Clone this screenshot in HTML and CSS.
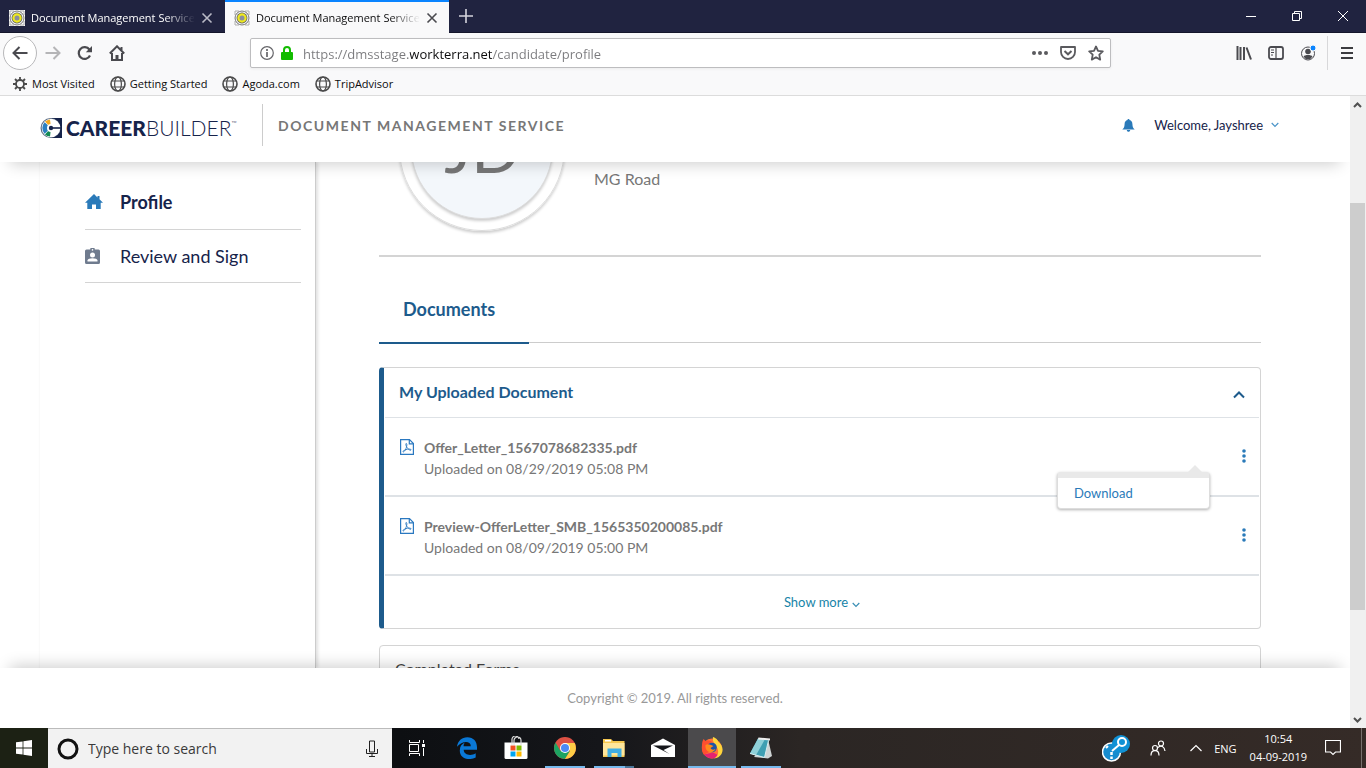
FILE: index.html
```html
<!doctype html>
<html lang="en">

<head>
    <meta charset="utf-8">
    <title>Document Management Service</title>
    <link rel="stylesheet" href="styles.css">
</head>

<body>
    <!-- shared icons -->
    <svg class="sprite" width="0" height="0">
        <symbol id="favicon" viewBox="0 0 16 16">
            <rect width="16" height="16" fill="#fff"/>
            <path d="M1 5V1h4M11 1h4v4M15 11v4h-4M5 15H1v-4" fill="none" stroke="#aaa" stroke-width="1"/>
            <circle cx="8" cy="8" r="7" fill="#f1f1f1" stroke="#777"/>
            <circle cx="8" cy="8" r="5.400" fill="#55585c"/>
            <circle cx="8" cy="8" r="3.600" fill="#8b8f9c" stroke="#efe920" stroke-width="2.200"/>
        </symbol>
        <symbol id="globe" viewBox="0 0 16 16">
            <g fill="none" stroke="#4a4a4a">
                <circle cx="8" cy="8" r="7" stroke-width="1.6"/>
                <ellipse cx="8" cy="8" rx="3.4" ry="7" stroke-width="1.2"/>
                <path d="M2 5h12M2 11h12" stroke-width="1.2"/>
            </g>
        </symbol>
        <symbol id="close" viewBox="0 0 12 12">
            <path d="M1.5 1.5l9 9M10.500 1.500l-9 9" fill="none" stroke="currentColor" stroke-width="1.6"/>
        </symbol>
        <symbol id="pdf" viewBox="0 0 14 16">
            <g fill="none" stroke="#2a78c0">
                <path d="M.6.600h8.900l3.900 3.900v10.900H.6z" stroke-width="1.2"/>
                <path d="M9.300.800v4h4" stroke-width="1.2"/>
                <path d="M6.200 4.500c1.200 0 .6 3.200-.3 5.200-.8 1.900-2.200 3.700-2.900 3.200-.8-.8 2.500-2.400 4.600-2.700 2-.3 3.800 0 3.500.8-.4.800-2.600-.4-3.800-2C6.200 7.600 5.200 4.500 6.200 4.500z" stroke-width=".9"/>
            </g>
        </symbol>
        <symbol id="dots" viewBox="0 0 4 14">
            <circle cx="2" cy="2" r="1.8"/><circle cx="2" cy="7" r="1.8"/><circle cx="2" cy="12" r="1.800"/>
        </symbol>
    </svg>

    <div class="tabBar">
        <div class="tab">
            <svg width="16" height="16"><use href="#favicon"/></svg>
            <span class="tabTitle">Document Management Service</span>
            <button aria-label="Close tab"><svg width="12" height="12"><use href="#close"/></svg></button>
        </div>
        <div class="tab activeTab">
            <svg width="16" height="16"><use href="#favicon"/></svg>
            <span class="tabTitle">Document Management Service</span>
            <button aria-label="Close tab"><svg width="12" height="12"><use href="#close"/></svg></button>
        </div>
        <button class="newTab" aria-label="New tab"><svg width="14" height="14"><path d="M7 0v14M0 7h14" stroke="#d4d4dc" stroke-width="1.600"/></svg></button>
        <div class="windowButtons">
            <button aria-label="Minimize"><svg width="10" height="10"><path d="M0 5.500h10" stroke="#fff"/></svg></button>
            <button aria-label="Restore"><svg width="10" height="10"><path d="M.5 2.500h7v7h-7zM2.500 2.500v-2h7v7h-2" fill="none" stroke="#fff"/></svg></button>
            <button aria-label="Close"><svg width="10" height="10"><path d="M0 0l10 10M10 0L0 10" stroke="#fff"/></svg></button>
        </div>
    </div>

    <div class="navBar">
        <div class="navButtons">
            <button class="backButton" aria-label="Back"><svg width="16" height="14"><path d="M15.500 7H1.500M7.500 1L1.500 7l6 6" fill="none" stroke="#4a4a4f" stroke-width="2"/></svg></button>
            <button aria-label="Forward"><svg width="16" height="14"><path d="M.5 7h14M8.500 1l6 6-6 6" fill="none" stroke="#b5b5b7" stroke-width="2"/></svg></button>
            <button aria-label="Reload"><svg width="16" height="16"><path d="M13 10.500A5.900 5.900 0 1 1 12.400 4.500" fill="none" stroke="#4a4a4f" stroke-width="2.200"/><path d="M15 1v6.200H8.800z" fill="#4a4a4f"/></svg></button>
            <button aria-label="Home"><svg width="16" height="16"><path d="M.8 8.500L8 1.300l7.200 7.200M3 8v7h10V8M12.500 5V2" fill="none" stroke="#4a4a4f" stroke-width="2"/><path d="M6.500 15v-5h3v5z" fill="#4a4a4f"/></svg></button>
        </div>
        <div class="urlBox">
            <svg width="14" height="14"><circle cx="7" cy="7" r="6.300" fill="none" stroke="#66666a" stroke-width="1.200"/><path d="M7 6v5M7 3v2" stroke="#66666a" stroke-width="1.700"/></svg>
            <svg width="12" height="14"><path d="M3 7V4a3 3 0 0 1 6 0v3" fill="none" stroke="#12bc00" stroke-width="2"/><rect y="6" width="12" height="8" rx="1" fill="#12bc00"/></svg>
            <input class="urlInput" type="text" aria-label="Address" value="https://dmsstage.workterra.net/candidate/profile">
            <button aria-label="Page actions"><svg width="16" height="16" fill="#5a5a5e"><circle cx="2" cy="8" r="2"/><circle cx="8" cy="8" r="2"/><circle cx="14" cy="8" r="2"/></svg></button>
            <button aria-label="Save to Pocket"><svg width="16" height="16"><path d="M1 2h14v5a7 7 0 0 1-14 0z" fill="none" stroke="#5a5a5e" stroke-width="1.800" stroke-linejoin="round"/><path d="M4.500 6L8 9.300 11.500 6" fill="none" stroke="#5a5a5e" stroke-width="2"/></svg></button>
            <button aria-label="Bookmark"><svg width="16" height="16"><path d="M8 1.500l2 4.300 4.800.6-3.500 3.300.9 4.900L8 12.200l-4.200 2.400.9-4.900L1.200 6.400 6 5.800z" fill="none" stroke="#5a5a5e" stroke-width="1.800" stroke-linejoin="round"/></svg></button>
        </div>
        <div class="toolButtons">
            <button aria-label="Library"><svg width="16" height="16"><path d="M1.500 1v14M4.500 2v13M8 2v13M10.500 2.500l4.500 12" fill="none" stroke="#4a4a4f" stroke-width="2"/></svg></button>
            <button aria-label="Sidebars"><svg width="16" height="16"><rect x="1" y="2" width="14" height="12" rx="2" fill="none" stroke="#4a4a4f" stroke-width="1.800"/><path d="M8 2v12" stroke="#4a4a4f" stroke-width="1.200"/><path d="M3 5h3M3 7.500h3M3 10h2" stroke="#4a4a4f"/></svg></button>
            <button aria-label="Account"><svg width="16" height="16"><circle cx="8" cy="8.500" r="6.500" fill="none" stroke="#4a4a4f"/><circle cx="8" cy="6.500" r="2.800" fill="#4a4a4f"/><path d="M3.500 11.500c1-2 8-2 9 0a5 5 0 0 1-9 0z" fill="#4a4a4f"/><circle cx="13" cy="3" r="3" fill="#0a84ff" stroke="#f9f9fa"/></svg></button>
            <span class="toolLine"></span>
            <button aria-label="Menu"><svg width="12" height="12"><path d="M0 1h12M0 6h12M0 11h12" stroke="#3c3c40" stroke-width="2"/></svg></button>
        </div>
    </div>

    <div class="bookmarks">
        <a href="#"><svg width="16" height="16"><circle cx="8" cy="8" r="4" fill="none" stroke="#4a4a4a" stroke-width="1.800"/><path d="M8 1v3M8 12v3M1 8h3M12 8h3M3 3l2 2M11 11l2 2M13 3l-2 2M5 11l-2 2" stroke="#4a4a4a" stroke-width="1.800"/></svg>Most Visited</a>
        <a href="#"><svg width="16" height="16"><use href="#globe"/></svg>Getting Started</a>
        <a href="#"><svg width="16" height="16"><use href="#globe"/></svg>Agoda.com</a>
        <a href="#"><svg width="16" height="16"><use href="#globe"/></svg>TripAdvisor</a>
    </div>

    <div class="viewport">
        <div class="page">
            <header class="header">
                <a class="logo" href="#" aria-label="CareerBuilder">
                    <svg width="22" height="20" viewBox="0 0 22 20">
                        <path d="M10 0h12v20H10z" fill="#16234a"/>
                        <circle cx="10.500" cy="10" r="10" fill="#5d6e85"/>
                        <circle cx="11" cy="10" r="9.300" fill="#fff"/>
                        <path d="M11 10L5 3.500A8.600 8.600 0 0 1 10 1.400z" fill="#f5a81c"/>
                        <path d="M11 10L4.600 4.200a8.600 8.600 0 0 0 0 11.600z" fill="#2c7fc0"/>
                        <path d="M11 10L5 16.500a8.600 8.600 0 0 0 5 2.100z" fill="#128a53"/>
                        <circle cx="11" cy="10" r="4" fill="#fff"/>
                        <circle cx="11" cy="10" r="2.200" fill="#16234a"/>
                        <path d="M11 9.200h11v1.600H11z" fill="#16234a"/>
                    </svg>
                    <span class="logoText"><b>CAREER</b>BUILDER<small>™</small></span>
                </a>
                <h1 class="serviceName">DOCUMENT MANAGEMENT SERVICE</h1>
                <button class="bell" aria-label="Notifications"><svg width="13" height="13"><path d="M6.500 0c.7 0 1 .4 1 1C9.500 1.500 10.300 3 10.400 5c.1 3 .8 4.300 2.300 5.500H.3C1.800 9.300 2.500 8 2.600 5c.1-2 .9-3.500 2.900-4 0-.6.3-1 1-1zM4.800 11h3.400c0 2.400-3.400 2.400-3.400 0z" fill="#2a7ab9"/></svg></button>
                <button class="userMenu">Welcome, Jayshree<svg width="8" height="6"><path d="M.7 1L4 4.300 7.300 1" fill="none" stroke="#4a94c8" stroke-width="1.200"/></svg></button>
            </header>

            <div class="middle">
                <nav class="sidebar">
                    <a class="activeLink" href="#"><svg width="18" height="16"><path d="M9 0l3.500 3.400V2h2v3.300L18 8.700h-2.300V15H11v-4.500H7V15H2.300V8.700H0z" fill="#2a7ab9"/></svg>Profile</a>
                    <a href="#"><svg width="18" height="16"><path d="M1.500 1.500h3.700a2.300 2.300 0 0 1 4.600 0h3.700A1.500 1.500 0 0 1 15 3v11.500a1.500 1.500 0 0 1-1.500 1.500h-12A1.500 1.500 0 0 1 0 14.500V3a1.500 1.500 0 0 1 1.500-1.500z" fill="#6f7b8e"/><circle cx="7.500" cy="1.900" r=".8" fill="#fff"/><circle cx="7.500" cy="7" r="2.500" fill="#fff"/><path d="M2.500 13.500v-1c0-3 10-3 10 0v1z" fill="#fff"/></svg>Review and Sign</a>
                </nav>

                <main class="content">
                    <section class="profile">
                        <div class="avatar"><span>JD</span></div>
                        <p class="address">MG Road</p>
                    </section>

                    <div class="docTabs">
                        <button class="docTab">Documents</button>
                    </div>

                    <section class="card openCard">
                        <div class="cardHeader">
                            <h2>My Uploaded Document</h2>
                            <button aria-label="Collapse"><svg width="12" height="8"><path d="M1 6.500L6 1.500l5 5" fill="none" stroke="#1d5b8c" stroke-width="2"/></svg></button>
                        </div>
                        <div class="docRow">
                            <svg width="14" height="16"><use href="#pdf"/></svg>
                            <div class="docInfo">
                                <b>Offer_Letter_1567078682335.pdf</b>
                                <span>Uploaded on 08/29/2019 05:08 PM</span>
                            </div>
                            <button class="moreButton" aria-label="More"><svg width="4" height="14" fill="#2a7ab9"><use href="#dots"/></svg></button>
                            <div class="dropMenu"><a href="#">Download</a></div>
                        </div>
                        <div class="docRow">
                            <svg width="14" height="16"><use href="#pdf"/></svg>
                            <div class="docInfo">
                                <b>Preview-OfferLetter_SMB_1565350200085.pdf</b>
                                <span>Uploaded on 08/09/2019 05:00 PM</span>
                            </div>
                            <button class="moreButton" aria-label="More"><svg width="4" height="14" fill="#2a7ab9"><use href="#dots"/></svg></button>
                        </div>
                        <button class="showMore">Show more<svg width="8" height="6"><path d="M.7 1L4 4.300 7.300 1" fill="none" stroke="#3a8fb5" stroke-width="1.200"/></svg></button>
                    </section>

                    <section class="card">
                        <div class="cardHeader closedHeader">
                            <h2>Completed Forms</h2>
                        </div>
                    </section>
                </main>
            </div>

            <footer class="footer">Copyright © 2019. All rights reserved.</footer>
        </div>

        <div class="scrollBar">
            <svg width="15" height="17"><path d="M4 11l3.500-3.500L11 11" fill="none" stroke="#505050" stroke-width="2"/></svg>
            <div class="scrollTrack"><div class="scrollThumb"></div></div>
            <svg width="15" height="17"><path d="M4 7l3.500 3.500L11 7" fill="none" stroke="#505050" stroke-width="2"/></svg>
        </div>
    </div>

    <div class="taskBar">
        <button class="startButton" aria-label="Start"><svg width="16" height="16" fill="#fff"><path d="M0 2.300L6.600 1.400v6.200H0zM7.400 1.300L16 0v7.600H7.400zM0 8.400h6.600v6.200L0 13.700zM7.400 8.400H16V16l-8.600-1.200z"/></svg></button>
        <div class="searchBox">
            <svg width="22" height="22"><circle cx="11" cy="11" r="9" fill="none" stroke="#111" stroke-width="3"/></svg>
            <input type="text" aria-label="Search" placeholder="Type here to search">
            <button aria-label="Voice"><svg width="12" height="18"><path d="M3.500 1h5v11h-5zM.5 9v4.500h11V9M6 13.500V17M3 16.500h6" fill="none" stroke="#222"/></svg></button>
        </div>
        <div class="apps">
            <button class="taskView" aria-label="Task view"><svg width="18" height="16"><path d="M1.500 0v2.500h10V0M1.500 16v-2.500h10V16M1.500 4.500h9v7h-9zM15.500 0v3M15.500 8v8" fill="none" stroke="#fff"/><path d="M14 4h3v3h-3z" fill="#fff"/></svg></button>
            <button aria-label="Edge"><svg width="20" height="22" viewBox="0 0 20 22"><path d="M0 9.800C.8 4 4.800.3 10.300.3 16.500.3 20 4.600 20 10.300v2.500H6.700c.1 5.600 7.800 6.400 12 3.400v4.300c-6.500 3.300-15.900 1.600-15.900-7C2.800 9.400 5 6.800 8 5.600 6.900 6.600 6.600 7.900 6.600 9.200h7.200c0-5.600-8.900-5.600-13.800.6z" fill="#0a78d6"/></svg></button>
            <button aria-label="Store"><svg width="24" height="24"><path d="M.5 6.500h23v15a1.500 1.500 0 0 1-1.500 1.500H2a1.500 1.500 0 0 1-1.500-1.500z" fill="#fff"/><path d="M8 9V4a3.500 3.500 0 0 1 7-1M10 9V4.500a3.500 3.500 0 0 1 7 0V9" fill="none" stroke="#ddd" stroke-width="1.200"/><path d="M6.500 9.500h5v5h-5z" fill="#f25022"/><path d="M12.500 9.500h5v5h-5z" fill="#7fba00"/><path d="M6.500 15.500h5v5h-5z" fill="#00a4ef"/><path d="M12.500 15.500h5v5h-5z" fill="#ffb900"/></svg></button>
            <button class="running" aria-label="Chrome"><svg width="22" height="22"><circle cx="11" cy="11" r="11" fill="#dd5144"/><path d="M1.500 5.500A11 11 0 0 0 11 22l5-8.300L6.300 13.800z" fill="#1da462"/><path d="M11 22A11 11 0 0 0 20.700 6H11l5 8z" fill="#ffcd46"/><circle cx="11" cy="11" r="5" fill="#fff"/><circle cx="11" cy="11" r="4" fill="#4c8bf5"/></svg></button>
            <button class="running stacked" aria-label="File Explorer"><svg width="22" height="20"><path d="M0 1h8l2 2h11.500v16H0z" fill="#f5c750"/><path d="M2 2h6v1.500H2z" fill="#fff"/><path d="M0 5h21.500v12.500H0z" fill="#ffe69b"/><path d="M4.500 19v-8.500h14V19h-4v-4h-6v4z" fill="#41aee4"/></svg></button>
            <button aria-label="Mail"><svg width="24" height="20"><path d="M0 7L12 .5 24 7v12H0z" fill="#fff"/><path d="M2 7.500h20L12.500 12l6 4z" fill="#15161a"/></svg></button>
            <button class="running current" aria-label="Firefox"><svg width="22" height="22" viewBox="0 0 22 22">
                <circle cx="11" cy="11.500" r="10" fill="#ff7139"/>
                <path d="M1 8C1 5 2 3 2.500 2l2 2C9 2.500 11 5 11 5l-4 4 1 6-5 3C.8 15 .5 11 1 8z" fill="#ff4f2f"/>
                <path d="M3 17.500a10 10 0 0 0 15 1l-6-3z" fill="#e52371"/>
                <path d="M12 0c4 1.500 5 3.500 5 4.500 4 3 6 8 3.500 12.500A10 10 0 0 1 13 21.500c4-2 5-6 3.500-10C15.500 8 11 6 12 0z" fill="#ffd43c"/>
                <circle cx="11" cy="10.500" r="4.800" fill="#1f54a8"/>
                <path d="M4.500 8c2-1.500 4-.5 5.500 0l2.500 1-3 2c1 2 3 2 5 1-1 3-6 4.500-8.500 1.500C4.500 12 4.300 10 4.500 8z" fill="#ff8a1c"/>
            </svg></button>
            <button class="running" aria-label="Notepad"><svg width="24" height="22"><path d="M19 2l4 17-4 2.500L5 20z" fill="#cfd4d4"/><path d="M9 1.500L20 2.500 15.500 20.500 1 16.500z" fill="#3f9fb2"/><path d="M9 1.500l7 .7L7 18.200 1 16.500z" fill="#8fd0d8"/><path d="M9.500.500L21 1.500v2L9 2.500z" fill="#eee"/><path d="M1 16.500l14.500 4 4-17" fill="none" stroke="#d9eef0"/></svg></button>
        </div>
        <div class="tray">
            <svg class="helper" width="28" height="28"><circle cx="9.500" cy="18" r="9" fill="#168ccf" stroke="#fff" stroke-width="1.500"/><circle cx="19" cy="10" r="9" fill="#1091d5"/><circle cx="20" cy="8" r="4" fill="none" stroke="#fff" stroke-width="2"/><path d="M17 11l-7 6M6 12l-2 2" stroke="#fff" stroke-width="2"/><path d="M9.500 18v3M9.500 22.500v2.500" stroke="#fff" stroke-width="2.500"/></svg>
            <svg class="people" width="16" height="16"><g fill="none" stroke="#fff" stroke-width="1.200"><circle cx="5" cy="8" r="2.500"/><path d="M1 15.500c0-6.500 8-6.500 8 0"/><circle cx="11" cy="3.500" r="2.500"/><path d="M8 7.500c3-3 6.500-1 7 3.500"/></g></svg>
            <svg class="trayArrow" width="12" height="8"><path d="M.5 7L6 1.500 11.500 7" fill="none" stroke="#fff" stroke-width="1.200"/></svg>
            <span class="lang">ENG</span>
            <div class="clock"><span>10:54</span><span>04-09-2019</span></div>
            <svg class="notice" width="16" height="16"><path d="M.5.500h15v11.500h-5L8 14.500 5.500 12h-5z" fill="none" stroke="#fff" stroke-width="1.200"/></svg>
            <span class="desktopLine"></span>
        </div>
    </div>
</body>

</html>
```
FILE: styles.css
```css
* {
    margin: 0;
    padding: 0;
    box-sizing: border-box;
}

body {
    height: 100vh;
    display: flex;
    flex-direction: column;
    font: 11px "Open Sans", "Noto Sans", sans-serif;
    color: #0c0c0d;
    background: #fff;
    overflow: hidden;
}

button {
    border: none;
    background: none;
    font: inherit;
    color: inherit;
    display: flex;
    align-items: center;
    justify-content: center;
}

input {
    border: none;
    outline: none;
    background: none;
    font: inherit;
    min-width: 0;
    flex: 1;
}

a {
    color: inherit;
    text-decoration: none;
}

svg {
    flex: none;
}

.sprite {
    position: absolute;
}

/* browser */
.tabBar {
    height: 33px;
    flex: none;
    display: flex;
    background: #202340;
    border-bottom: 1px solid #14162b;
}

.tab {
    width: 225px;
    height: 33px;
    display: flex;
    align-items: center;
    padding: 2px 12px 0 9px;
    color: #fff;
}

.tab button {
    color: #b9bac6;
}

.activeTab {
    width: 224px;
    background: #f9f9fa;
    border-top: 2px solid #0a84ff;
    padding: 0 11px 0 9px;
    color: #0c0c0d;
}

.activeTab button {
    color: #4a4a4f;
}

.tabTitle {
    flex: 1;
    margin: 0 6px;
    overflow: hidden;
    white-space: nowrap;
    -webkit-mask-image: linear-gradient(to left, transparent, #000 30px);
    mask-image: linear-gradient(to left, transparent, #000 30px);
}

.newTab {
    width: 34px;
}

.windowButtons {
    margin-left: auto;
    display: flex;
}

.windowButtons button {
    width: 46px;
}

.navBar {
    height: 40px;
    flex: none;
    display: flex;
    align-items: center;
    justify-content: space-between;
    background: #f9f9fa;
    padding-left: 3px;
}

.navButtons {
    display: flex;
    align-items: center;
    width: 247px;
}

.navButtons button {
    width: 32px;
    height: 34px;
}

.navButtons .backButton {
    width: 34px;
    border: 1px solid #b8b8ba;
    border-radius: 50%;
    background: #fff;
}

.urlBox {
    flex: 1;
    height: 30px;
    display: flex;
    align-items: center;
    gap: 7px;
    padding: 0 4px 0 9px;
    background: #fff;
    border: 1px solid #bdbdbf;
    border-radius: 2px;
    box-shadow: 0 1px 3px rgba(0, 0, 0, 0.06);
}

.urlBox button {
    width: 21px;
    height: 28px;
}

/* the domain is darker than the rest of the address */
.urlInput {
    font-size: 13px;
    padding-top: 2px;
    margin-left: 3px;
    color: transparent;
    background: linear-gradient(to right, #7a7a7d 107px, #0c0c0d 107px, #0c0c0d 189px, #7a7a7d 189px);
    -webkit-background-clip: text;
    background-clip: text;
}

.toolButtons {
    display: flex;
    align-items: center;
    justify-content: flex-end;
    width: 255px;
    padding-right: 3px;
}

.toolButtons button {
    width: 32px;
    height: 34px;
}

.toolLine {
    width: 1px;
    height: 34px;
    margin: 0 3px;
    background: #d8d8da;
}

.bookmarks {
    height: 23px;
    flex: none;
    display: flex;
    align-items: center;
    gap: 15px;
    padding: 0 12px 1px;
    background: #f9f9fa;
    border-bottom: 1px solid #dcdcdc;
}

.bookmarks a {
    display: flex;
    align-items: center;
    gap: 4px;
}

/* site */
.viewport {
    flex: 1;
    min-height: 0;
    display: flex;
    font-family: Lato, sans-serif;
}

.page {
    flex: 1;
    display: flex;
    flex-direction: column;
    overflow: hidden;
}

.header {
    height: 66px;
    flex: none;
    display: flex;
    align-items: center;
    padding: 0 71px 8px 40px;
    position: relative;
    z-index: 2;
    background: #fff;
    box-shadow: 0 12px 16px -10px rgba(0, 0, 0, 0.2);
}

.logo {
    display: flex;
    align-items: center;
    gap: 4px;
    width: 222px;
    padding-top: 6px;
}

.logoText {
    font-size: 21px;
    line-height: 20px;
    font-weight: 300;
    color: #16234a;
}

.logoText b {
    font-weight: 900;
}

.logoText small {
    font-size: 7px;
    vertical-align: top;
    line-height: 10px;
}

.serviceName {
    height: 42px;
    line-height: 43px;
    border-left: 1px solid #ccc;
    padding-left: 15px;
    font-size: 14px;
    font-weight: 700;
    letter-spacing: 0.11em;
    color: #777;
}

.bell {
    margin-left: auto;
}

.userMenu {
    margin-left: 19px;
    gap: 8px;
    font-size: 13px;
    color: #16234a;
}

.middle {
    flex: 1;
    min-height: 0;
    display: flex;
    overflow: hidden;
}

.sidebar {
    width: 277px;
    flex: none;
    margin-left: 39px;
    padding: 14px 14px 0 45px;
    border-left: 1px solid #fafafa;
    border-right: 1px solid #ccc;
    box-shadow: 2px 0 3px rgba(0, 0, 0, 0.12);
}

.sidebar a {
    display: flex;
    align-items: center;
    gap: 17px;
    height: 53px;
    border-bottom: 1px solid #d4d4d4;
    font-size: 18px;
    color: #16234a;
}

.sidebar .activeLink {
    height: 54px;
    padding-bottom: 2px;
    font-weight: 700;
}

.content {
    flex: 1;
    min-width: 0;
    padding: 0 89px 0 63px;
}

.profile {
    height: 95px;
    display: flex;
    align-items: flex-end;
    gap: 29px;
    padding: 0 20px 24px;
    overflow: hidden;
    border-bottom: 2px solid #d4d4d4;
}

.avatar {
    width: 166px;
    height: 166px;
    flex: none;
    padding: 11px;
    border: 1px solid #ddd;
    border-radius: 50%;
    box-shadow: 0 2px 3px rgba(0, 0, 0, 0.2);
}

.avatar span {
    height: 100%;
    display: flex;
    align-items: center;
    justify-content: center;
    border: 1px solid #ddd;
    border-radius: 50%;
    box-shadow: 0 2px 3px rgba(0, 0, 0, 0.2);
    background: #f3f7fb;
    font-size: 64px;
    color: #777;
}

.address {
    font-size: 16px;
    line-height: 20px;
    margin-bottom: 42px;
    color: #777;
}

.docTabs {
    height: 86px;
    display: flex;
    align-items: flex-end;
    box-shadow: inset 0 -1px #ccc;
}

.docTab {
    width: 150px;
    height: 68px;
    margin-bottom: -1px;
    padding-left: 24px;
    justify-content: flex-start;
    border-bottom: 2px solid #1d5b8c;
    font-size: 18px;
    font-weight: 700;
    color: #1d5b8c;
}

.card {
    margin-bottom: 16px;
    padding: 0 1px;
    border: 1px solid #d4d4d4;
    border-radius: 4px;
}

.openCard {
    margin-top: 24px;
    border-left: 5px solid #1d5b8c;
}

.cardHeader {
    height: 50px;
    display: flex;
    align-items: center;
    justify-content: space-between;
    padding: 0 14px 2px;
    border-bottom: 1px solid #dee2e6;
    color: #1d5b8c;
}

.cardHeader h2 {
    font-size: 16px;
}

.cardHeader button {
    padding-top: 6px;
}

.closedHeader {
    padding-bottom: 4px;
    color: #444;
}

.closedHeader h2 {
    font-weight: 400;
}

.docRow {
    display: flex;
    align-items: flex-start;
    gap: 10px;
    padding: 19px 13px 16px 15px;
    border-bottom: 2px solid #dee2e6;
    position: relative;
    font-size: 14px;
    line-height: 21px;
    color: #777;
}

.docRow > svg {
    margin-top: 2px;
}

.docInfo {
    flex: 1;
    display: flex;
    flex-direction: column;
}

.moreButton {
    height: 38px;
}

.dropMenu {
    position: absolute;
    z-index: 1;
    right: 49px;
    top: 54px;
    width: 153px;
    padding: 5px 16px 4px;
    background: #fff;
    border: 1px solid #ddd;
    border-top: 6px solid #e9e9e9;
    border-radius: 4px;
    box-shadow: 0 1px 3px rgba(0, 0, 0, 0.3);
    font-size: 13px;
    color: #2a7ab9;
}

.dropMenu::before {
    content: "";
    position: absolute;
    right: 7px;
    top: -13px;
    border: 7px solid transparent;
    border-top: none;
    border-bottom-color: #e9e9e9;
}

.showMore {
    width: 100%;
    height: 52px;
    gap: 4px;
    font-size: 13px;
    color: #1784a8;
}

.showMore svg {
    margin-top: 5px;
}

.footer {
    height: 60px;
    flex: none;
    position: relative;
    z-index: 2;
    background: #fff;
    box-shadow: 0 -12px 16px -10px rgba(0, 0, 0, 0.2);
    text-align: center;
    line-height: 60px;
    font-size: 13px;
    color: #999;
}

.scrollBar {
    width: 16px;
    display: flex;
    flex-direction: column;
    padding-right: 1px;
    background: #f0f0f0;
}

.scrollTrack {
    flex: 1;
    display: flex;
    flex-direction: column;
}

.scrollThumb {
    height: 68%;
    margin-top: 90px;
    background: #cdcdcd;
}

/* taskbar */
.taskBar {
    height: 40px;
    flex: none;
    display: flex;
    background: linear-gradient(to right, #1c2114 0, #1c2114 48px, #0d0f12 400px, #15161a 600px, #2b2624 800px, #352b27 100%);
    color: #fff;
}

.startButton {
    width: 48px;
}

.searchBox {
    width: 344px;
    display: flex;
    align-items: center;
    gap: 9px;
    padding: 0 14px 0 9px;
    background: #f2f2f2;
    border-top: 1px solid #bbb;
    font-size: 14px;
}

.searchBox input::placeholder {
    color: #3a3a3a;
}

.apps {
    display: flex;
    gap: 1px;
}

.apps button {
    width: 48px;
}

.apps .taskView {
    width: 50px;
}

.apps .running {
    background: linear-gradient(#76b9ed, #76b9ed) center bottom / 40px 2px no-repeat;
}

.apps .stacked {
    background: linear-gradient(to right, #76b9ed 31px, #4a7598 31px) center bottom / 40px 2px no-repeat;
}

.apps .current {
    background: linear-gradient(#76b9ed, #76b9ed) center bottom / 48px 2px no-repeat #4b4a4c;
}

.tray {
    margin-left: auto;
    display: flex;
    align-items: center;
}

.people {
    margin-left: 20px;
}

.trayArrow {
    margin: 0 12px 0 24px;
}

.clock {
    display: flex;
    flex-direction: column;
    align-items: center;
    margin: 0 18px 0 13px;
    line-height: 18px;
}

.desktopLine {
    width: 1px;
    height: 40px;
    margin: 0 4px 0 20px;
    background: #77706d;
}
```
